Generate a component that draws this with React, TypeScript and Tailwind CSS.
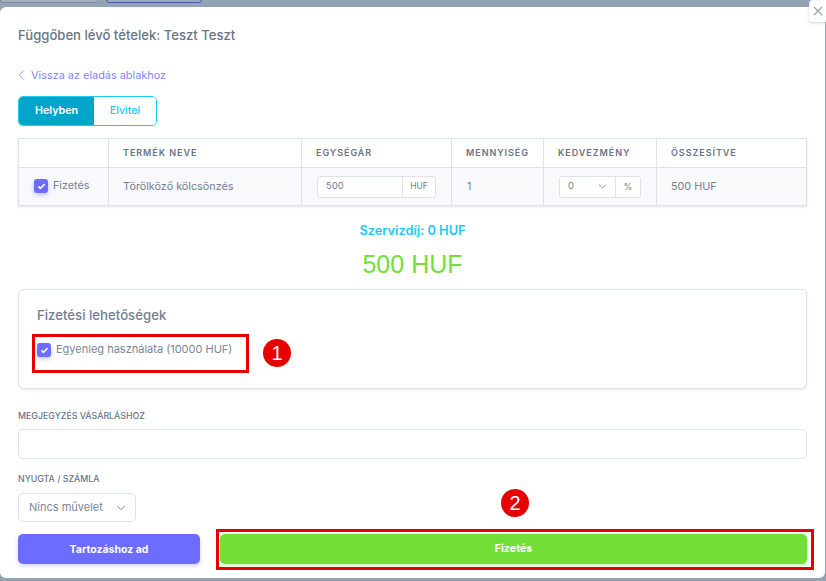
import React from "react";

const Check = () => (
  <span className="flex h-[14px] w-[14px] shrink-0 items-center justify-center rounded-[3px] bg-[#6c6cff] shadow-[0_2px_4px_rgba(108,108,255,0.4)]">
    <svg width="9" height="9" viewBox="0 0 24 24" fill="none" stroke="#fff" strokeWidth="4" strokeLinecap="round" strokeLinejoin="round">
      <path d="M5 13l4 4L19 7" />
    </svg>
  </span>
);

const Chevron = ({ size = 12 }: { size?: number }) => (
  <svg width={size} height={size} viewBox="0 0 24 24" fill="none" stroke="#7a8699" strokeWidth="1.8" strokeLinecap="round" strokeLinejoin="round">
    <path d="M5 8.5l7 7 7-7" />
  </svg>
);

const Th = ({ children, cls = "" }: { children?: React.ReactNode; cls?: string }) => (
  <div className={`flex items-center border-r border-[#dde2e8] pl-[14px] text-[9px] font-semibold tracking-[0.95px] text-[#677489] ${cls}`}>{children}</div>
);

const Td = ({ children, cls = "" }: { children?: React.ReactNode; cls?: string }) => (
  <div className={`flex items-center border-r border-[#dde2e8] pl-[14px] text-[10.8px] text-[#748093] ${cls}`}>{children}</div>
);

export default function App() {
  return (
    <div className="relative h-[581px] w-[826px] overflow-hidden bg-[#94a3b4] font-['Inter',sans-serif]">
      <div className="flex h-[7px] items-start gap-[7px] overflow-hidden">
        <div className="-mt-[8px] h-[11px] w-[99px] rounded-[3px] border border-[#7d8a9b] bg-[#a3afbd]" />
        <div className="-mt-[8px] h-[11px] w-[96px] rounded-[3px] border border-[#4759ac] bg-[#9aa9bb]" />
      </div>

      <div className="h-[571px] w-[825px] rounded-[6px] bg-white pl-[18px] pr-[18px]">
        <h1 className="flex h-[58px] items-center text-[13.1px] font-medium text-[#677489]">Függőben lévő tételek: Teszt Teszt</h1>

        <div className="mt-px flex h-[18px] items-center gap-[6px] text-[10.9px] text-[#8585ff]">
          <svg width="7" height="10" viewBox="0 0 7 10" fill="none" stroke="#8f8fff" strokeWidth="1"><path d="M5.5 0.8L1.2 5l4.3 4.2" /></svg>
          Vissza az eladás ablakhoz
        </div>

        <div className="mt-[12px] flex h-[30px] w-[139px] overflow-hidden rounded-[5px] border border-[#1ccaf0] text-[10.7px] font-semibold">
          <div className="flex w-[75px] items-center justify-center bg-[#00a5c9] text-white">Helyben</div>
          <div className="flex flex-1 items-center justify-center bg-white font-medium text-[#1ccaf0]">Elvitel</div>
        </div>

        <div className="mt-[12px] w-[789px] border border-[#dde2e8] shadow-[0_1px_2px_rgba(90,105,130,0.2)]">
          <div className="grid h-[29px] grid-cols-[90px_193px_150px_92px_113px_1fr] border-b border-[#dde2e8]">
            <Th />
            <Th>TERMÉK NEVE</Th>
            <Th>EGYSÉGÁR</Th>
            <Th>MENNYISÉG</Th>
            <Th>KEDVEZMÉNY</Th>
            <Th cls="border-r-0">ÖSSZESÍTVE</Th>
          </div>
          <div className="grid h-[37px] grid-cols-[90px_193px_150px_92px_113px_1fr] bg-[#f8f9fb]">
            <Td cls="pl-[15px]">
              <span className="-mt-[1px] flex items-center gap-[5px]">
                <Check />
                Fizetés
              </span>
            </Td>
            <Td cls="pt-[1px]">Törölköző kölcsönzés</Td>
            <Td cls="pl-[15px]">
              <div className="flex h-[22px] w-[119px] rounded-[3px] border border-[#dde2e8] bg-white text-[9.5px]">
                <span className="flex flex-1 items-center pl-[8px]">500</span>
                <span className="flex w-[33px] items-center justify-center border-l border-[#dde2e8] text-[8.5px]">HUF</span>
              </div>
            </Td>
            <Td cls="pl-[15px] pt-[1px]">1</Td>
            <Td cls="pl-[15px]">
              <div className="flex h-[22px] w-[82px] rounded-[3px] border border-[#dde2e8] bg-white text-[9.5px]">
                <span className="flex flex-1 items-center justify-between pl-[8px] pr-[7px]">
                  0
                  <Chevron size={11} />
                </span>
                <span className="flex w-[25px] items-center justify-center border-l border-[#dde2e8] text-[9px]">%</span>
              </div>
            </Td>
            <Td cls="border-r-0 pt-[1px]">500 HUF</Td>
          </div>
        </div>

        <div className="mt-[17px] w-[789px] text-center text-[12.8px] font-semibold leading-[16px] text-[#1ccaf0]">Szervizdíj: 0 HUF</div>
        <div className="mt-[8px] w-[789px] text-center font-['Liberation_Sans',sans-serif] text-[25px] font-medium leading-[34px] text-[#72df37]">500 HUF</div>

        <div className="mt-[8px] h-[100px] w-[789px] rounded-[6px] border border-[#dde2e8] pl-[18px] shadow-[0_1px_2px_rgba(90,105,130,0.15)]">
          <div className="mt-[16px] text-[13.2px] font-medium leading-[18px] text-[#748093]">Fizetési lehetőségek</div>
          <div className="mt-[19px] flex items-center gap-[5px] text-[11px] text-[#7a8699]">
            <Check />
            <span className="-mt-[2px]">Egyenleg használata (10000 HUF)</span>
          </div>
        </div>

        <label className="mt-[21px] block text-[8.8px] font-medium leading-[12px] text-[#677489]">MEGJEGYZÉS VÁSÁRLÁSHOZ</label>
        <div className="mt-[7px] h-[30px] w-[789px] rounded-[5px] border border-[#dde2e8] bg-white" />

        <label className="mt-[14px] block text-[8.8px] font-medium leading-[12px] text-[#677489]">NYUGTA / SZÁMLA</label>
        <div className="mt-[8px] flex h-[29px] w-[118px] items-center justify-between rounded-[5px] border border-[#dde2e8] pl-[10px] pr-[8px] text-[11px] text-[#7a8699]">
          Nincs művelet
          <Chevron size={12} />
        </div>

        <div className="mt-[12px] flex w-[789px] gap-[20px]">
          <button className="h-[30px] w-[182px] rounded-[5px] bg-[#6c6cff] pt-[1px] text-[10.5px] font-bold text-white shadow-[0_2px_4px_rgba(108,108,255,0.3)]">Tartozáshoz ad</button>
          <button className="h-[30px] flex-1 rounded-[5px] bg-[#72df37] pt-[1px] text-[10.7px] font-bold text-white shadow-[0_2px_4px_rgba(114,223,55,0.35)]">Fizetés</button>
        </div>
      </div>

      <div className="absolute right-0 top-0 flex h-[22px] w-[17px] items-center justify-center rounded-bl-[4px] rounded-tl-[4px] bg-white shadow-[0_1px_3px_rgba(90,105,130,0.3)]">
        <svg width="10" height="10" viewBox="0 0 10 10" fill="none" stroke="#97a1b0" strokeWidth="1.1"><path d="M1 1l8 8M9 1l-8 8" /></svg>
      </div>

      <div className="absolute left-[32px] top-[334px] h-[39px] w-[217px] border-[3px] border-[#e60000]" />
      <div className="absolute left-[263px] top-[339px] flex h-[28px] w-[28px] items-center justify-center rounded-full bg-[#e60000] font-['Liberation_Sans',sans-serif] text-[20px] text-white">1</div>
      <div className="absolute left-[501px] top-[489px] flex h-[28px] w-[28px] items-center justify-center rounded-full bg-[#e60000] font-['Liberation_Sans',sans-serif] text-[20px] text-white">2</div>
      <div className="absolute left-[216px] top-[529px] h-[41px] w-[598px] border-[3px] border-[#e60000]" />
    </div>
  );
}
